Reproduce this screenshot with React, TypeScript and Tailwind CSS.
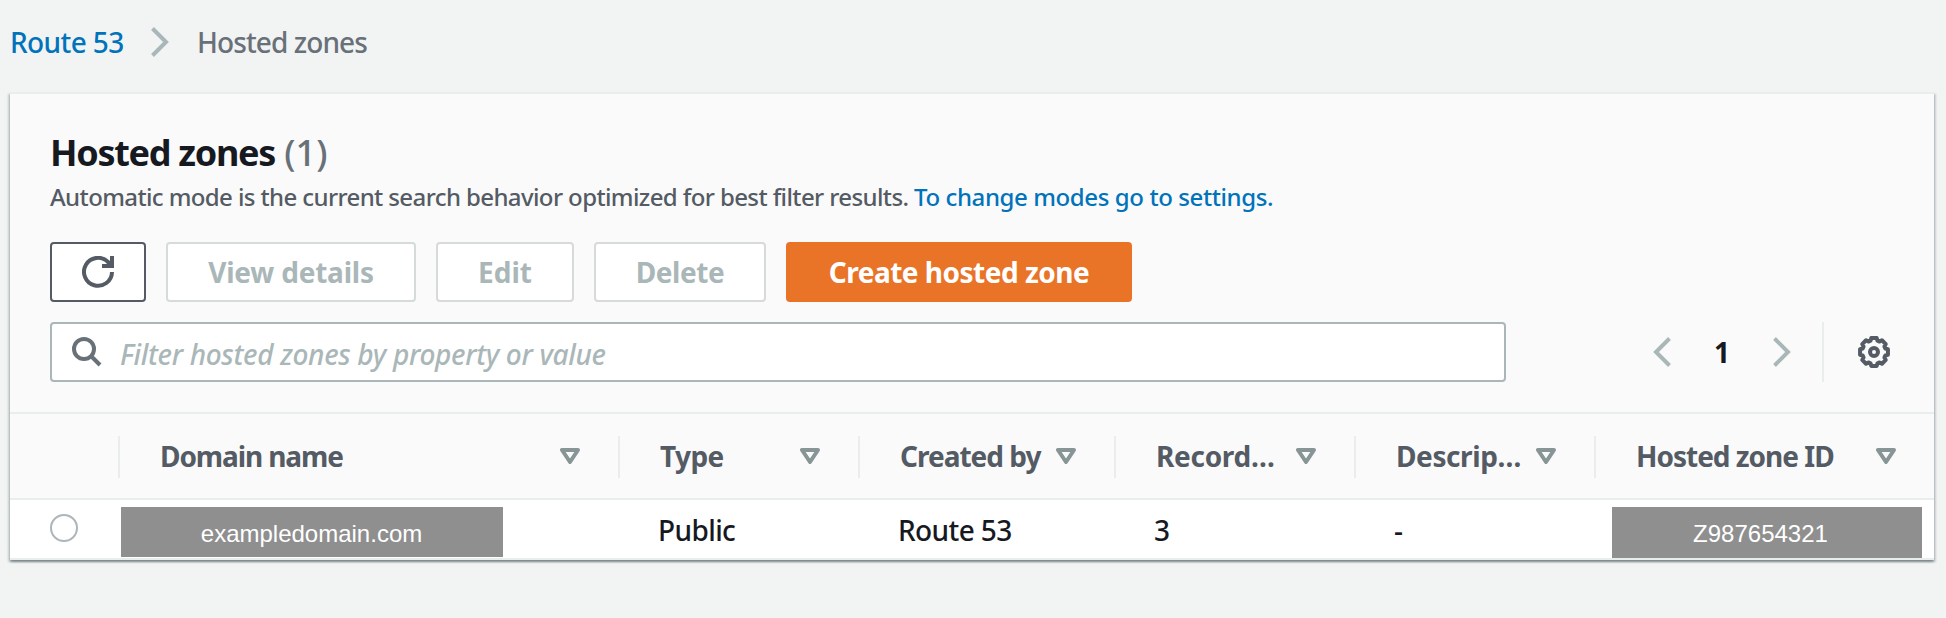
import React from "react";

const columns = [
  { label: "Domain name", width: "w-[500px]", spacing: "tracking-[-1.1px]" },
  { label: "Type", width: "w-[240px]", spacing: "tracking-[-0.6px]" },
  { label: "Created by", width: "w-[256px]", spacing: "tracking-[-1px]" },
  { label: "Record…", width: "w-[240px]", spacing: "tracking-[-0.3px]" },
  { label: "Descrip…", width: "w-[240px]", spacing: "tracking-[-0.4px]" },
  { label: "Hosted zone ID", width: "w-[340px]", spacing: "tracking-[-1px]" },
];

const gearOutline =
  Array.from({ length: 8 }, (_, i) => i * 45)
    .flatMap((a) => [
      [a - 11, 14.2],
      [a + 11, 14.2],
      [a + 17, 11.8],
      [a + 28, 11.8],
    ])
    .map(([deg, r], i) => {
      const t = (deg * Math.PI) / 180;
      return `${i ? "L" : "M"}${(16 + r * Math.cos(t)).toFixed(2)} ${(16 + r * Math.sin(t)).toFixed(2)}`;
    })
    .join("") + "Z";

function Chevron({ flip = false }: { flip?: boolean }) {
  return (
    <svg width="18" height="30" viewBox="0 0 18 30" fill="none" stroke="#aab7b8" strokeWidth="4" className={flip ? "rotate-180" : ""}>
      <path d="M1.5 1.5 15 15 1.5 28.5" />
    </svg>
  );
}

function SortIcon() {
  return (
    <svg width="20" height="16" viewBox="0 0 20 16" fill="none" stroke="#879596" strokeWidth="4" strokeLinejoin="round">
      <path d="M2 2h16l-8 12z" />
    </svg>
  );
}

export default function App() {
  return (
    <div className="h-[618px] w-[1946px] overflow-hidden bg-[#f2f3f3] font-['Noto_Sans',sans-serif] text-[28px] leading-9 font-medium whitespace-nowrap text-[#16191f]">
      <nav className="flex h-[92px] items-center pb-2 pl-[10px]">
        <a className="w-[141px] tracking-[-0.6px] text-[#0073bb]">Route 53</a>
        <Chevron />
        <span className="ml-[28px] tracking-[-0.9px] text-[#687078]">Hosted zones</span>
      </nav>
      <main className="mx-[10px] w-[1924px] border-t-2 border-[#eaeded] bg-[#fafafa] shadow-[0_2px_2px_rgba(0,28,36,0.3),2px_2px_2px_rgba(0,28,36,0.15),-2px_2px_2px_rgba(0,28,36,0.15)]">
        <header className="flex h-[318px] flex-col px-10 pt-[35px]">
          <h1 className="h-11 text-[36px] leading-[48px] font-bold">
            <span className="tracking-[-1.3px]">Hosted zones</span> <span className="font-medium text-[#687078]">(1)</span>
          </h1>
          <p className="mt-2 h-8 text-[24px] leading-8 tracking-[-0.61px] text-[#545b64]">
            Automatic mode is the current search behavior optimized for best filter results. <a className="tracking-[-0.4px] text-[#0073bb]">To change modes go to settings.</a>
          </p>
          <div className="mt-[29px] flex gap-5 font-bold">
            <button className="flex h-[60px] w-24 items-center justify-center rounded border-2 border-[#545b64] bg-white">
              <svg width="32" height="32" viewBox="0 0 32 32" fill="none" stroke="#545b64" strokeWidth="4">
                <path d="M30 16a14 14 0 1 1-4-10l4 4M30 0v10H20" />
              </svg>
            </button>
            <button className="h-[60px] w-[250px] rounded border-2 border-[#d5dbdb] bg-white tracking-[-0.2px] text-[#aab7b8]">View details</button>
            <button className="h-[60px] w-[138px] rounded border-2 border-[#d5dbdb] bg-white text-[#aab7b8]">Edit</button>
            <button className="h-[60px] w-[172px] rounded border-2 border-[#d5dbdb] bg-white tracking-[-0.4px] text-[#aab7b8]">Delete</button>
            <button className="h-[60px] w-[346px] rounded bg-[#e97327] tracking-[-0.5px] text-white">Create hosted zone</button>
          </div>
          <div className="mt-5 flex items-center">
            <div className="flex h-[60px] w-[1456px] items-center rounded border-2 border-[#aab7b8] bg-white pl-5 text-[#aab7b8] italic">
              <svg width="30" height="30" viewBox="0 0 30 30" fill="none" stroke="#687078" strokeWidth="4">
                <circle cx="12" cy="12" r="10" />
                <path d="m19 19 9 9" />
              </svg>
              <span className="ml-[18px] pt-[3px] tracking-[-0.33px]">Filter hosted zones by property or value</span>
            </div>
            <div className="ml-[147px] flex h-[60px] w-[171px] items-center justify-between border-r-2 border-[#eaeded] pr-[31px]">
              <Chevron flip />
              <b>1</b>
              <Chevron />
            </div>
            <svg className="ml-[34px]" width="32" height="32" viewBox="0 0 32 32" fill="none" stroke="#545b64" strokeWidth="4">
              <path strokeLinejoin="round" d={gearOutline} />
              <circle cx="16" cy="16" r="4" />
            </svg>
          </div>
        </header>
        <div className="flex h-[88px] items-center border-y-2 border-[#eaeded] pt-[2px] pl-[108px] font-bold text-[#545b64]">
          {columns.map((c) => (
            <div key={c.label} className={`flex h-[42px] shrink-0 items-center justify-between border-l-2 border-[#eaeded] pr-[38px] pb-[2px] pl-10 ${c.width}`}>
              <span className={c.spacing}>{c.label}</span>
              <SortIcon />
            </div>
          ))}
        </div>
        <div className="flex h-[60px] border-b-2 border-[#eaeded] bg-white pl-10">
          <i className="mt-[14px] h-7 w-7 rounded-full border-2 border-[#aab7b8]" />
          <div className="mt-[7px] ml-[43px] h-[50px] w-[382px] bg-[#8f8f8f] pt-[9px] pr-px text-center font-['Liberation_Sans',sans-serif] text-[24px] font-normal text-white">exampledomain.com</div>
          <div className="flex pt-3 pl-[155px]">
            <span className="w-[240px] tracking-[-0.6px]">Public</span>
            <span className="w-[256px] tracking-[-0.6px]">Route 53</span>
            <span className="w-[240px]">3</span>
            <span className="w-[218px]">-</span>
          </div>
          <div className="mt-[7px] h-[51px] w-[310px] bg-[#8f8f8f] pt-[9px] pr-[13px] text-center font-['Liberation_Sans',sans-serif] text-[24px] font-normal text-white">Z987654321</div>
        </div>
      </main>
    </div>
  );
}
